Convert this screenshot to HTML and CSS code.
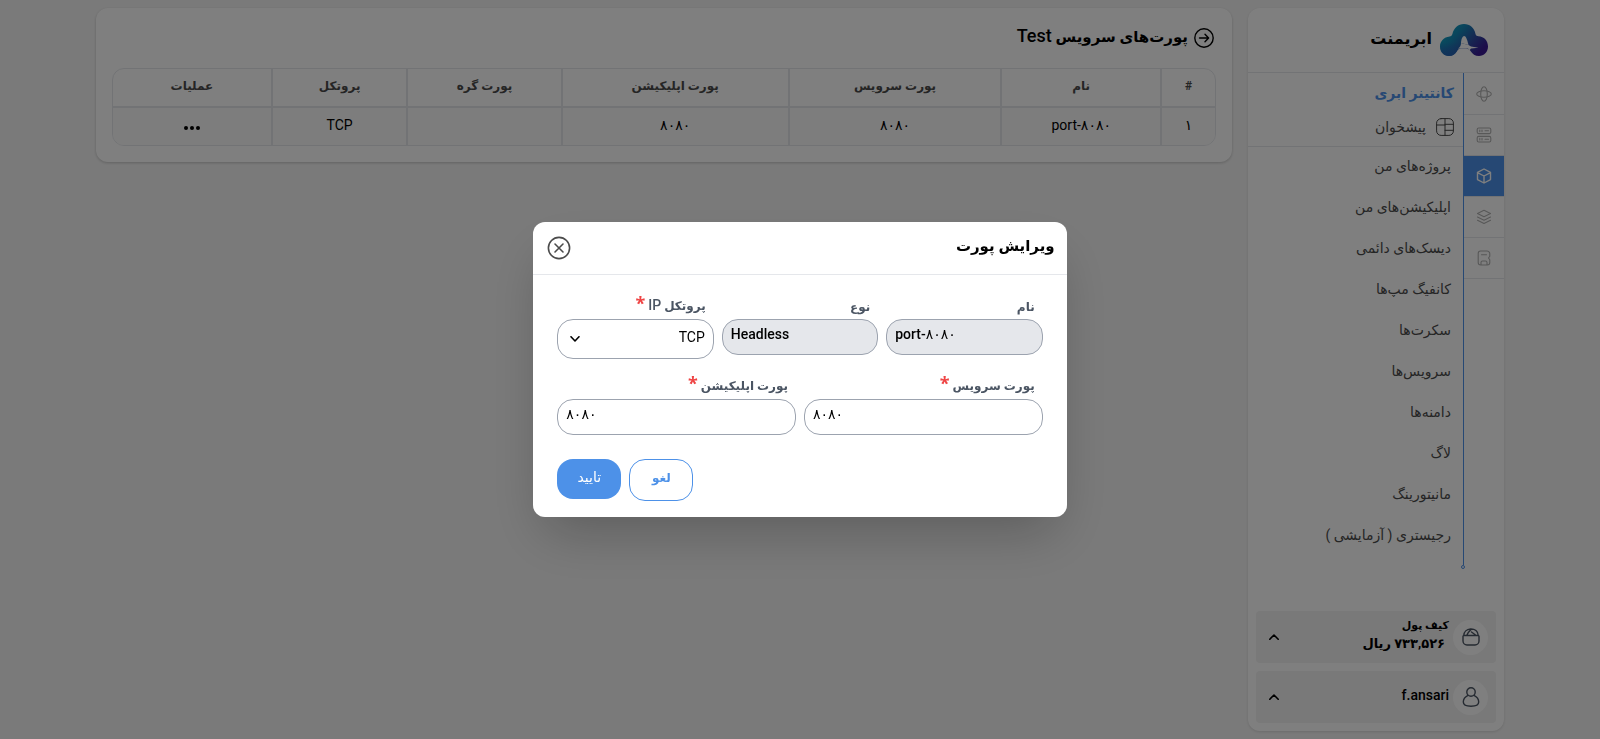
FILE: index.html
```html
<!DOCTYPE html>
<html lang="fa" dir="rtl">
<head>
<meta charset="utf-8">
<meta name="viewport" content="width=device-width, initial-scale=1">
<title>ابریمنت</title>
<link rel="stylesheet" href="styles.css">
</head>
<body>
<div class="page">
  <aside class="sidebar">
    <a class="brand" href="#">
      <svg class="brand-logo" viewBox="0 0 48 32" aria-hidden="true">
        <defs>
          <linearGradient id="cloud" x1="0" y1="0" x2="1" y2="0.6">
            <stop offset="0" stop-color="#10b4c8"/>
            <stop offset="0.4" stop-color="#1489b8"/>
            <stop offset="0.7" stop-color="#2c50a4"/>
            <stop offset="1" stop-color="#3a1a94"/>
          </linearGradient>
          <linearGradient id="foot" x1="0.5" y1="0" x2="0.5" y2="1">
            <stop offset="0.3" stop-color="#2463b4" stop-opacity="0"/>
            <stop offset="1" stop-color="#2463b4"/>
          </linearGradient>
        </defs>
        <path fill="url(#cloud)" d="M24 0c6 0 10.500 4 11.500 10 .4 1.600 1.500 2.200 3 2.300C44 12.500 48 17 48 22.500 48 28 44 32 39 32c-4 0-6.500-2-8.500-5-1-1.600-2.300-2.500-4.500-2.500h-5c-2 0-3 1-4 2.700C15.200 30.300 12.500 32 9 32c-5 0-9-4-9-9.500S4 13 9.500 12.400c1.600-.2 2.500-.9 2.900-2.400C13.800 4 18 0 24 0Z"/>
        <path fill="url(#foot)" d="M9.500 12.400c4 0 8 4 9 12.100-1 .7-1.500 2.700-3 4.500C13.800 31 12 32 9 32c-5 0-9-4-9-9.500s4-10.100 9.500-10.100Z"/>
        <path fill="#fff" d="M21 19c.2-4 1.500-7 3.200-7 1.600 0 2.800 3 4.300 9Z"/>
        <path fill="#fff" d="M21 19l7.500 2 2.500 1.500 7.500 1.300-7.500.7-1.500 1.700-1.500-1.700H18c2-1.200 3-2.700 3-5.500Z"/>
      </svg>
      <span class="brand-name">ابریمنت</span>
    </a>
    <div class="sidebar-body">
      <nav class="rail" aria-label="محصولات">
        <a class="rail-item" href="#" aria-label="ابر">
          <svg class="rail-icon" viewBox="0 0 16 16"><ellipse cx="8" cy="8" rx="7.300" ry="3.300"/><ellipse cx="8" cy="8" rx="3.300" ry="7.300"/></svg>
        </a>
        <a class="rail-item" href="#" aria-label="سرور">
          <svg class="rail-icon" viewBox="0 0 16 16"><rect x="1.200" y="1" width="13.600" height="5.600" rx="1.500"/><rect x="1.200" y="9.400" width="13.600" height="5.600" rx="1.500"/><path d="M3.800 3v1.600M6 3v1.600M9 3.800h3.500M3.800 11.400V13M6 11.400V13M9 12.200h3.500"/></svg>
        </a>
        <a class="rail-item rail-item-active" href="#" aria-label="کانتینر ابری">
          <svg class="rail-icon rail-icon-active" viewBox="0 0 16 16"><path d="M8 1l6.500 3.400v7.200L8 15l-6.500-3.400V4.400ZM1.500 4.700 8 8l6.500-3.300M8 8v7"/></svg>
        </a>
        <a class="rail-item" href="#" aria-label="لایه‌ها">
          <svg class="rail-icon" viewBox="0 0 16 16"><path d="M8 1.200l6.500 3.300L8 7.800 1.500 4.500ZM1.500 8 8 11.300 14.500 8M1.500 11.200 8 14.500l6.500-3.300"/></svg>
        </a>
        <a class="rail-item" href="#" aria-label="فضای ابری">
          <svg class="rail-icon" viewBox="0 0 16 16"><path d="M4.500 1h6.500a2.800 2.800 0 0 1 2.800 2.800v2.400L12.500 8l1.300 1.800v2.700A2.500 2.500 0 0 1 11.300 15H4.700a2.500 2.500 0 0 1-2.500-2.500V3.500A2.500 2.500 0 0 1 4.500 1ZM5.500 4.800h5M5 15v-2.500a1.500 1.500 0 0 1 1.500-1.500h3a1.500 1.500 0 0 1 1.500 1.500V15"/></svg>
        </a>
      </nav>
      <nav class="menu" aria-label="کانتینر ابری">
        <div class="menu-head">
          <h2 class="menu-title">کانتینر ابری</h2>
          <a class="dashboard" href="#">
            <svg class="dashboard-icon" viewBox="0 0 18 18" aria-hidden="true"><rect x="0.600" y="0.600" width="16.800" height="16.800" rx="4.500"/><path d="M9 .6v16.800M.6 7H9M9 12.300h8.400M9 6.300h8.400"/></svg>
            <span>پیشخوان</span>
          </a>
        </div>
        <ul class="menu-list">
          <li><a class="menu-link" href="#">پروژه‌های من</a></li>
          <li><a class="menu-link" href="#">اپلیکیشن‌های من</a></li>
          <li><a class="menu-link" href="#">دیسک‌های دائمی</a></li>
          <li><a class="menu-link" href="#">کانفیگ مپ‌ها</a></li>
          <li><a class="menu-link" href="#">سکرت‌ها</a></li>
          <li><a class="menu-link" href="#">سرویس‌ها</a></li>
          <li><a class="menu-link" href="#">دامنه‌ها</a></li>
          <li><a class="menu-link" href="#">لاگ</a></li>
          <li><a class="menu-link" href="#">مانیتورینگ</a></li>
          <li><a class="menu-link" href="#">رجیستری ( آزمایشی )</a></li>
        </ul>
      </nav>
    </div>
    <div class="account">
      <button class="account-card" type="button">
        <span class="avatar"><svg class="avatar-icon" viewBox="0 0 20 20" aria-hidden="true"><path d="M2.500 8.500h15a1 1 0 0 1 .5 1v4.500a4 4 0 0 1-4 4H6a4 4 0 0 1-4-4V9.500a1 1 0 0 1 .5-1ZM2.800 8.300C3 5 5.500 2.200 9.500 2c4.500-.2 7.500 2.500 7.700 6.300M6 8c.5-2 2-3.500 4-5.500M10.500 5l4 3"/></svg></span>
        <span class="account-text"><span class="wallet-label">کیف پول</span><span class="wallet-sum">۷۳۳,۵۲۶ ریال</span></span>
        <svg class="chevron" viewBox="0 0 10 6" aria-hidden="true"><path d="M.8 5.200 5 1l4.200 4.200"/></svg>
      </button>
      <button class="account-card" type="button">
        <span class="avatar"><svg class="avatar-icon" viewBox="0 0 20 20" aria-hidden="true"><circle cx="10" cy="5" r="4.200"/><path d="M7 8.300c-2.700 1.300-4.700 4-4.700 6.700 0 3 2.700 4.200 7.700 4.200s7.700-1.200 7.700-4.200c0-2.700-2-5.400-4.700-6.700"/></svg></span>
        <span class="account-text"><span class="user-name">f.ansari</span></span>
        <svg class="chevron" viewBox="0 0 10 6" aria-hidden="true"><path d="M.8 5.200 5 1l4.200 4.200"/></svg>
      </button>
    </div>
  </aside>

  <main class="content">
    <div class="content-head">
      <a class="back" href="#" aria-label="بازگشت"><svg class="back-icon" viewBox="0 0 20 20"><circle cx="10" cy="10" r="9.200"/><path d="M5.500 10h9M11 6.200l3.600 3.800L11 13.800"/></svg></a>
      <h1 class="content-title">پورت‌های سرویس <span class="content-service">Test</span></h1>
    </div>
    <table class="ports">
      <colgroup><col class="col-index"><col class="col-name"><col class="col-service"><col class="col-app"><col class="col-node"><col class="col-protocol"><col class="col-actions"></colgroup>
      <thead>
        <tr><th>#</th><th>نام</th><th>پورت سرویس</th><th>پورت اپلیکیشن</th><th>پورت گره</th><th>پروتکل</th><th>عملیات</th></tr>
      </thead>
      <tbody>
        <tr><td>۱</td><td>port-۸۰۸۰</td><td>۸۰۸۰</td><td>۸۰۸۰</td><td></td><td>TCP</td><td><button class="more" type="button" aria-label="عملیات"><svg class="more-icon" viewBox="0 0 16 4"><circle cx="2" cy="2" r="2"/><circle cx="8" cy="2" r="2"/><circle cx="14" cy="2" r="2"/></svg></button></td></tr>
      </tbody>
    </table>
  </main>
</div>

<div class="overlay">
  <form class="modal" role="dialog" aria-labelledby="modal-title">
    <header class="modal-head">
      <h2 class="modal-title" id="modal-title">ویرایش پورت</h2>
      <button class="close" type="button" aria-label="بستن"><svg class="close-icon" viewBox="0 0 24 24"><circle cx="12" cy="12" r="10.600"/><path d="M8 8l8 8M16 8l-8 8"/></svg></button>
    </header>
    <div class="modal-body">
      <div class="row">
        <div class="field">
          <label class="label label-plain" for="name">نام</label>
          <input class="input" id="name" type="text" dir="ltr" value="port-۸۰۸۰" disabled>
        </div>
        <div class="field">
          <label class="label label-plain" for="type">نوع</label>
          <input class="input" id="type" type="text" dir="ltr" value="Headless" disabled>
        </div>
        <div class="field">
          <label class="label" for="protocol">پروتکل <span class="label-latin">IP</span> <span class="required">*</span></label>
          <div class="select-wrap">
            <select class="select" id="protocol"><option>TCP</option><option>UDP</option></select>
            <svg class="select-arrow" viewBox="0 0 10 6" aria-hidden="true"><path d="M1 .8 5 5 9 .8"/></svg>
          </div>
        </div>
      </div>
      <div class="row">
        <div class="field">
          <label class="label" for="service-port">پورت سرویس <span class="required">*</span></label>
          <input class="input" id="service-port" type="text" dir="ltr" value="۸۰۸۰">
        </div>
        <div class="field">
          <label class="label" for="app-port">پورت اپلیکیشن <span class="required">*</span></label>
          <input class="input" id="app-port" type="text" dir="ltr" value="۸۰۸۰">
        </div>
      </div>
      <div class="actions">
        <button class="button button-outline" type="button">لغو</button>
        <button class="button button-primary" type="submit">تایید</button>
      </div>
    </div>
  </form>
</div>
</body>
</html>
```

FILE: styles.css
```css
*,
*::before,
*::after {
  box-sizing: border-box;
}

body {
  margin: 0;
  background: #f5f5f5;
  color: #000;
  font-family: Roboto, "DejaVu Sans", sans-serif;
  font-size: 14px;
  line-height: 20px;
}

h1,
h2,
ul {
  margin: 0;
  padding: 0;
}

a {
  color: inherit;
  text-decoration: none;
}

ul {
  list-style: none;
}

button,
input,
select {
  font: inherit;
  color: inherit;
  margin: 0;
}

button {
  border: 0;
  padding: 0;
  background: none;
}

svg {
  display: block;
  flex: none;
  fill: none;
  stroke: currentColor;
  stroke-linecap: round;
  stroke-linejoin: round;
}

.page {
  display: flex;
  align-items: flex-start;
  gap: 16px;
  width: 88%;
  min-height: 100vh;
  margin: 0 auto;
  padding: 8px 0;
}

/* Sidebar */

.sidebar {
  display: flex;
  flex: none;
  flex-direction: column;
  align-self: stretch;
  width: 256px;
  border-radius: 12px;
  background: #fff;
  box-shadow: 0 1px 3px rgba(0, 0, 0, 0.12);
}

.brand {
  display: flex;
  align-items: center;
  gap: 8px;
  height: 65px;
  padding: 0 16px;
  border-bottom: 1px solid #e5e7eb;
}

.brand-logo {
  width: 48px;
  height: 32px;
  stroke: none;
}

.brand-name {
  padding-bottom: 2px;
  font-size: 16px;
  font-weight: 700;
}

.sidebar-body {
  display: flex;
}

.rail {
  flex: none;
  width: 40px;
}

.rail-item {
  display: flex;
  align-items: center;
  justify-content: center;
  height: 41px;
  border-bottom: 1px solid #e5e7eb;
  color: #b0b0b0;
}

.rail-item:first-child {
  height: 42px;
}

.rail-item-active {
  background: #4d91e8;
  color: #fff;
}

.rail-icon {
  width: 16px;
  height: 16px;
  stroke-width: 1.1;
}

.rail-icon-active {
  stroke-width: 1.4;
}

.menu {
  position: relative;
  flex: 1;
  padding-bottom: 8px;
  border-right: 1px solid #4d91e8;
}

.menu::after {
  content: "";
  position: absolute;
  right: -2px;
  bottom: -4px;
  width: 4px;
  height: 4px;
  border: 1px solid #4d91e8;
  border-radius: 50%;
}

.menu-head {
  padding: 8px 9px;
  border-bottom: 1px solid #e5e7eb;
}

.menu-title {
  color: #4d91e8;
  font-size: 14px;
  font-weight: 700;
  line-height: 24px;
}

.dashboard {
  display: flex;
  align-items: center;
  gap: 10px;
  margin-top: 12px;
  padding-bottom: 1px;
  color: #4b4b4b;
  line-height: 20px;
}

.dashboard-icon {
  width: 18px;
  height: 18px;
}

.menu-link {
  display: block;
  padding: 9px 12px 11px;
  color: #4b4b4b;
  line-height: 21px;
}

.account {
  display: flex;
  flex-direction: column;
  gap: 8px;
  margin-top: auto;
  padding: 8px;
}

.account-card {
  display: flex;
  align-items: center;
  gap: 4px;
  width: 100%;
  height: 52px;
  padding: 0 8px 0 13px;
  border-radius: 4px;
  background: #f3f3f3;
  text-align: start;
}

.avatar {
  display: flex;
  align-items: center;
  justify-content: center;
  flex: none;
  width: 35px;
  height: 35px;
  border-radius: 50%;
  background: #fff;
  color: #4b5563;
}

.avatar-icon {
  width: 20px;
  height: 20px;
  stroke-width: 1.4;
}

.account-text {
  display: flex;
  flex: 1;
  flex-direction: column;
  padding-bottom: 4px;
  font-weight: 700;
}

.wallet-label {
  font-size: 11px;
  line-height: 18px;
}

.wallet-sum {
  padding-right: 4px;
  font-size: 13px;
  line-height: 18px;
}

.user-name {
  font-size: 14px;
  font-weight: 500;
}

.chevron {
  width: 10px;
  height: 6px;
  stroke-width: 1.6;
}

/* Ports */

.content {
  flex: 1;
  min-width: 0;
  padding: 16px;
  border-radius: 12px;
  background: #fff;
  box-shadow: 0 1px 3px rgba(0, 0, 0, 0.2);
}

.content-head {
  display: flex;
  align-items: center;
  gap: 6px;
  height: 28px;
  margin-bottom: 16px;
  padding-right: 2px;
}

.back-icon {
  width: 20px;
  height: 20px;
  stroke-width: 1.4;
}

.content-title {
  padding-bottom: 4px;
  font-size: 15px;
  font-weight: 700;
  line-height: 24px;
}

.content-service {
  font-size: 18px;
  font-weight: 500;
}

.ports {
  width: 100%;
  border: 1px solid #e5e7eb;
  border-radius: 12px;
  border-spacing: 0;
  overflow: hidden;
  table-layout: fixed;
  text-align: center;
}

.ports th,
.ports td {
  padding: 5px 8px 8px;
  border: 0 solid #e5e7eb;
}

.ports th {
  height: 39px;
  border-bottom-width: 2px;
  color: #4b4b4b;
  font-size: 12px;
  font-weight: 700;
}

.ports td {
  height: 37px;
  background: #fafafa;
}

.ports th + th,
.ports td + td {
  border-right-width: 2px;
}

.col-index { width: 4.8%; }
.col-name { width: 14.5%; }
.col-service { width: 19.3%; }
.col-app { width: 20.6%; }
.col-node { width: 14%; }
.col-protocol { width: 12.3%; }
.col-actions { width: 14.5%; }

.more {
  display: inline-flex;
  align-items: flex-end;
  height: 12px;
}

.more-icon {
  width: 16px;
  height: 4px;
  fill: #000;
  stroke: none;
}

/* Dialog */

.overlay {
  position: fixed;
  inset: 0;
  display: flex;
  align-items: center;
  justify-content: center;
  background: rgba(0, 0, 0, 0.5);
}

.modal {
  width: 33.333%;
  min-width: 420px;
  border-radius: 12px;
  background: #fff;
  box-shadow: 0 25px 50px -12px rgba(0, 0, 0, 0.25);
}

.modal-head {
  display: flex;
  align-items: center;
  justify-content: space-between;
  height: 53px;
  padding: 0 12px 0 14px;
  border-bottom: 1px solid #e5e7eb;
}

.modal-title {
  padding-bottom: 4px;
  font-size: 15px;
  font-weight: 700;
  line-height: 24px;
}

.close {
  color: #4b4b4b;
}

.close-icon {
  width: 24px;
  height: 24px;
  stroke-width: 1.6;
}

.modal-body {
  display: flex;
  flex-direction: column;
  gap: 16px;
  padding: 20px 24px 16px;
}

.row {
  display: flex;
  gap: 8px;
}

.field {
  flex: 1;
  min-width: 0;
}

.label {
  display: block;
  height: 24px;
  padding: 0 8px;
  color: #4b5563;
  font-size: 12px;
  font-weight: 700;
  line-height: 18px;
}

.label-plain {
  line-height: 24px;
}

.label-latin {
  font-size: 14px;
  font-weight: 500;
}

.required {
  color: #ef4444;
  font-family: "Open Sans", sans-serif;
  font-size: 18px;
  line-height: 16px;
}

.input,
.select {
  display: block;
  width: 100%;
  border: 1px solid #9ca3af;
  border-radius: 16px;
  background: #fff;
  color: #000;
}

.input {
  height: 36px;
  padding: 0 8px 6px;
}

.input:disabled {
  background: #e5e7eb;
  font-weight: 500;
}

.select-wrap {
  position: relative;
}

.select {
  height: 40px;
  padding: 0 8px 4px 32px;
  appearance: none;
}

.select-arrow {
  position: absolute;
  top: 17px;
  left: 13px;
  width: 10px;
  height: 6px;
  stroke-width: 1.6;
  pointer-events: none;
}

.actions {
  display: flex;
  justify-content: flex-end;
  align-items: flex-start;
  gap: 8px;
  padding-top: 8px;
}

.button {
  width: 64px;
  height: 40px;
  padding-bottom: 4px;
  border-radius: 16px;
  font-size: 14px;
}

.button-outline {
  height: 42px;
  border: 1px solid #4d91e8;
  color: #4d91e8;
  font-size: 12px;
  font-weight: 700;
}

.button-primary {
  background: #4d91e8;
  color: #fff;
}
```
